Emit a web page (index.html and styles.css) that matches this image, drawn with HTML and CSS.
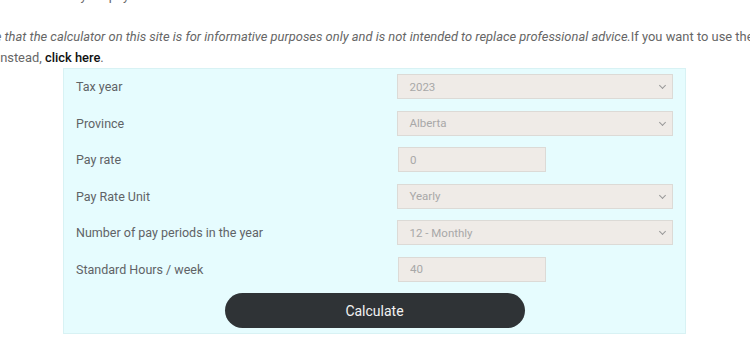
FILE: index.html
```html
<html>

<head>
    <link rel="stylesheet" href="styles.css">
</head>

<body>
    <p class="intro">at your pay</p>

    <p class="notice">
        <em>Please note that the calculator on this site is for informative purposes only and is not intended to replace professional advice.</em>If you want to use the old calculator<br>
        instead, <a href="#">click here</a>.
    </p>

    <form class="calc">
        <div class="calc__row">
            <label class="calc__label">Tax year</label>
            <div class="calc__select">
                <select>
                    <option>2023</option>
                </select>
            </div>
        </div>
        <div class="calc__row">
            <label class="calc__label">Province</label>
            <div class="calc__select">
                <select>
                    <option>Alberta</option>
                </select>
            </div>
        </div>
        <div class="calc__row">
            <label class="calc__label">Pay rate</label>
            <input class="calc__input" type="text" value="0">
        </div>
        <div class="calc__row">
            <label class="calc__label">Pay Rate Unit</label>
            <div class="calc__select">
                <select>
                    <option>Yearly</option>
                </select>
            </div>
        </div>
        <div class="calc__row">
            <label class="calc__label">Number of pay periods in the year</label>
            <div class="calc__select">
                <select>
                    <option>12 - Monthly</option>
                </select>
            </div>
        </div>
        <div class="calc__row">
            <label class="calc__label">Standard Hours / week</label>
            <input class="calc__input" type="text" value="40">
        </div>
        <button class="calc__button" type="button">Calculate</button>
    </form>
</body>

</html>
```

FILE: styles.css
```css
body {
    margin: 0;
    overflow: hidden;
    font-family: Roboto, "Liberation Sans", sans-serif;
    font-size: 13px;
    color: #666;
    background: #fff;
}

.intro {
    margin: -12px 0 0 0;
    padding-left: 66px;
    line-height: 16px;
    white-space: nowrap;
}

.notice {
    margin: 22px 0 0 -3px;
    font-size: 12.9px;
    white-space: nowrap;
    line-height: 21px;
    text-indent: -61px;
}

.notice em {
    font-style: italic;
}

.notice a {
    color: #111;
    font-weight: 500;
    text-decoration: none;
}

.calc {
    box-sizing: border-box;
    width: 623px;
    margin: 0 0 0 63px;
    padding: 5px 12px 5px 12px;
    background: #e6fcfe;
    border: 1px solid #d8f2f4;
}

.calc__row {
    display: flex;
    align-items: center;
    height: 25px;
    margin-bottom: 11.5px;
}

.calc__label {
    width: 322px;
    font-size: 12.5px;
    color: #5f6366;
}

.calc__select {
    position: relative;
    width: 276px;
}

.calc__select select,
.calc__input {
    box-sizing: border-box;
    height: 25px;
    padding: 0 0 0 11px;
    border: 1px solid #dcdad6;
    background: #efebe7;
    color: #a8a8a8;
    font-family: Roboto, "Liberation Sans", sans-serif;
    font-size: 11.5px;
    border-radius: 0;
    outline: none;
}

.calc__select select {
    width: 100%;
    -webkit-appearance: none;
    appearance: none;
}

.calc__select::after {
    content: " ";
    position: absolute;
    right: 8px;
    top: 9px;
    width: 4px;
    height: 4px;
    border-right: 1px solid #999;
    border-bottom: 1px solid #999;
    transform: rotate(45deg);
    pointer-events: none;
}

.calc__input {
    width: 148px;
}

.calc__button {
    display: block;
    width: 300px;
    height: 35px;
    margin: 0.5px auto 0 auto;
    border: none;
    border-radius: 18px;
    background: #2f3336;
    color: #f2f2f2;
    font-family: Roboto, "Liberation Sans", sans-serif;
    font-size: 14px;
    cursor: pointer;
}
```
